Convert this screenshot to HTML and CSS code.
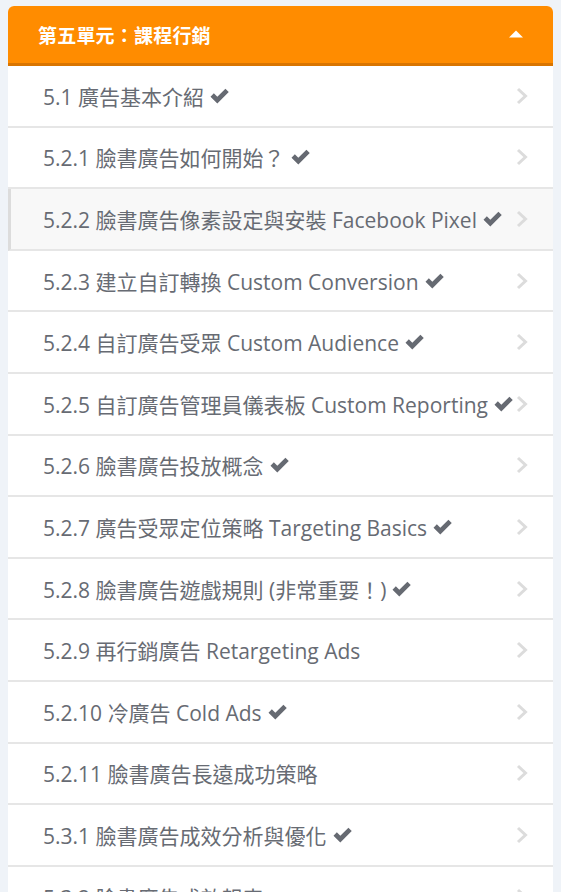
FILE: index.html
```html
<!DOCTYPE html>
<html lang="zh-Hant">
<head>
<meta charset="utf-8">
<title>第五單元：課程行銷</title>
<link rel="stylesheet" href="styles.css">
</head>
<body>
<div class="card">
  <div class="head">
    <span class="head-title">第五單元：課程行銷</span>
    <svg class="caret" width="14" height="8" viewBox="0 0 14 8"><polygon points="0,7.5 7,0.5 14,7.5" fill="#fff"/></svg>
  </div>
  <ul class="list">
    <li class="row"><span class="label">5.1 廣告基本介紹<svg class="check" viewBox="0 0 16 14"><path d="M1 7.5 L3.6 4.9 L6.3 7.6 L12.6 1.3 L15.2 3.9 L6.3 12.8 Z" fill="#666a72"/></svg></span><svg class="chev" viewBox="0 0 12 18"><polyline points="2,2 9.5,9 2,16" fill="none" stroke="#dcdcdc" stroke-width="3"/></svg></li>
    <li class="row"><span class="label">5.2.1 臉書廣告如何開始？<svg class="check" viewBox="0 0 16 14"><path d="M1 7.5 L3.6 4.9 L6.3 7.6 L12.6 1.3 L15.2 3.9 L6.3 12.8 Z" fill="#666a72"/></svg></span><svg class="chev" viewBox="0 0 12 18"><polyline points="2,2 9.5,9 2,16" fill="none" stroke="#dcdcdc" stroke-width="3"/></svg></li>
    <li class="row active"><span class="label">5.2.2 臉書廣告像素設定與安裝 Facebook Pixel<svg class="check" viewBox="0 0 16 14"><path d="M1 7.5 L3.6 4.9 L6.3 7.6 L12.6 1.3 L15.2 3.9 L6.3 12.8 Z" fill="#666a72"/></svg></span><svg class="chev" viewBox="0 0 12 18"><polyline points="2,2 9.5,9 2,16" fill="none" stroke="#dcdcdc" stroke-width="3"/></svg></li>
    <li class="row"><span class="label">5.2.3 建立自訂轉換 Custom Conversion<svg class="check" viewBox="0 0 16 14"><path d="M1 7.5 L3.6 4.9 L6.3 7.6 L12.6 1.3 L15.2 3.9 L6.3 12.8 Z" fill="#666a72"/></svg></span><svg class="chev" viewBox="0 0 12 18"><polyline points="2,2 9.5,9 2,16" fill="none" stroke="#dcdcdc" stroke-width="3"/></svg></li>
    <li class="row"><span class="label">5.2.4 自訂廣告受眾 Custom Audience<svg class="check" viewBox="0 0 16 14"><path d="M1 7.5 L3.6 4.9 L6.3 7.6 L12.6 1.3 L15.2 3.9 L6.3 12.8 Z" fill="#666a72"/></svg></span><svg class="chev" viewBox="0 0 12 18"><polyline points="2,2 9.5,9 2,16" fill="none" stroke="#dcdcdc" stroke-width="3"/></svg></li>
    <li class="row"><span class="label">5.2.5 自訂廣告管理員儀表板 Custom Reporting<svg class="check" viewBox="0 0 16 14"><path d="M1 7.5 L3.6 4.9 L6.3 7.6 L12.6 1.3 L15.2 3.9 L6.3 12.8 Z" fill="#666a72"/></svg></span><svg class="chev" viewBox="0 0 12 18"><polyline points="2,2 9.5,9 2,16" fill="none" stroke="#dcdcdc" stroke-width="3"/></svg></li>
    <li class="row"><span class="label">5.2.6 臉書廣告投放概念<svg class="check" viewBox="0 0 16 14"><path d="M1 7.5 L3.6 4.9 L6.3 7.6 L12.6 1.3 L15.2 3.9 L6.3 12.8 Z" fill="#666a72"/></svg></span><svg class="chev" viewBox="0 0 12 18"><polyline points="2,2 9.5,9 2,16" fill="none" stroke="#dcdcdc" stroke-width="3"/></svg></li>
    <li class="row"><span class="label">5.2.7 廣告受眾定位策略 Targeting Basics<svg class="check" viewBox="0 0 16 14"><path d="M1 7.5 L3.6 4.9 L6.3 7.6 L12.6 1.3 L15.2 3.9 L6.3 12.8 Z" fill="#666a72"/></svg></span><svg class="chev" viewBox="0 0 12 18"><polyline points="2,2 9.5,9 2,16" fill="none" stroke="#dcdcdc" stroke-width="3"/></svg></li>
    <li class="row"><span class="label">5.2.8 臉書廣告遊戲規則 (非常重要！)<svg class="check" viewBox="0 0 16 14"><path d="M1 7.5 L3.6 4.9 L6.3 7.6 L12.6 1.3 L15.2 3.9 L6.3 12.8 Z" fill="#666a72"/></svg></span><svg class="chev" viewBox="0 0 12 18"><polyline points="2,2 9.5,9 2,16" fill="none" stroke="#dcdcdc" stroke-width="3"/></svg></li>
    <li class="row"><span class="label">5.2.9 再行銷廣告 Retargeting Ads</span><svg class="chev" viewBox="0 0 12 18"><polyline points="2,2 9.5,9 2,16" fill="none" stroke="#dcdcdc" stroke-width="3"/></svg></li>
    <li class="row"><span class="label">5.2.10 冷廣告 Cold Ads<svg class="check" viewBox="0 0 16 14"><path d="M1 7.5 L3.6 4.9 L6.3 7.6 L12.6 1.3 L15.2 3.9 L6.3 12.8 Z" fill="#666a72"/></svg></span><svg class="chev" viewBox="0 0 12 18"><polyline points="2,2 9.5,9 2,16" fill="none" stroke="#dcdcdc" stroke-width="3"/></svg></li>
    <li class="row"><span class="label">5.2.11 臉書廣告長遠成功策略</span><svg class="chev" viewBox="0 0 12 18"><polyline points="2,2 9.5,9 2,16" fill="none" stroke="#dcdcdc" stroke-width="3"/></svg></li>
    <li class="row"><span class="label">5.3.1 臉書廣告成效分析與優化<svg class="check" viewBox="0 0 16 14"><path d="M1 7.5 L3.6 4.9 L6.3 7.6 L12.6 1.3 L15.2 3.9 L6.3 12.8 Z" fill="#666a72"/></svg></span><svg class="chev" viewBox="0 0 12 18"><polyline points="2,2 9.5,9 2,16" fill="none" stroke="#dcdcdc" stroke-width="3"/></svg></li>
    <li class="row"><span class="label">5.3.2 臉書廣告成效報表</span><svg class="chev" viewBox="0 0 12 18"><polyline points="2,2 9.5,9 2,16" fill="none" stroke="#dcdcdc" stroke-width="3"/></svg></li>
  </ul>
</div>
</body>
</html>
```
FILE: styles.css
```css
html, body {
  margin: 0;
  padding: 0;
  background: #eff3f8;
}
body {
  padding: 6px 8px 0 8px;
  font-family: "Open Sans", "Noto Sans CJK TC", sans-serif;
}
.card {
  background: #fff;
  border-radius: 6px 6px 0 0;
  overflow: hidden;
}
.head {
  display: flex;
  align-items: center;
  justify-content: space-between;
  height: 57px;
  padding: 0 30px 0 30px;
  background: #ff8c00;
  border-bottom: 3px solid #d97500;
}
.head-title {
  color: #fff;
  font-weight: 700;
  font-size: 19px;
  letter-spacing: 0.2px;
}
.caret {
  display: block;
  width: 14px;
  height: 8px;
  margin-top: -1px;
}
.list {
  list-style: none;
  margin: 0;
  padding: 0;
}
.row {
  display: flex;
  align-items: center;
  justify-content: space-between;
  height: 59.6px;
  padding: 0 25px 0 35px;
  border-bottom: 2px solid #e6e6e6;
  color: #676b73;
  font-size: 21px;
  white-space: nowrap;
}
.row.active {
  background: #f8f8f8;
  border-left: 3px solid #dcdcdc;
  padding-left: 32px;
}
.label {
  display: flex;
  align-items: center;
}
.check {
  width: 21px;
  height: 18px;
  margin-left: 5px;
  flex: none;
}
.chev {
  width: 12px;
  height: 18px;
  flex: none;
}
```
